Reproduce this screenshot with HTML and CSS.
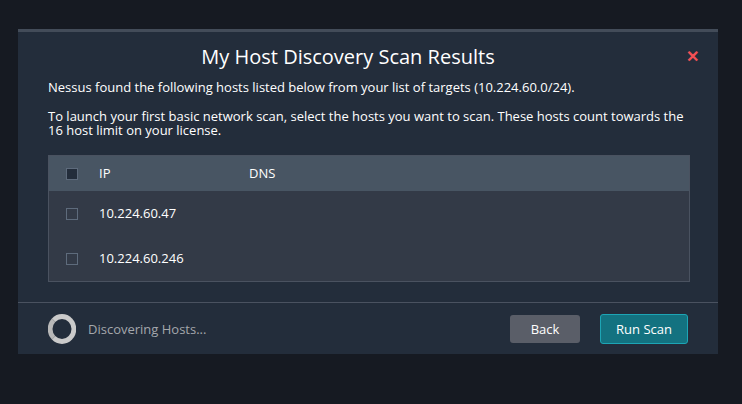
FILE: index.html
```html
<!DOCTYPE html>
<html>
<head>
<meta charset="utf-8">
<link rel="stylesheet" href="styles.css">
</head>
<body>
<div class="modal">
  <div class="header">
    <h1 class="title">My Host Discovery Scan Results</h1>
    <span class="close">&#x2715;</span>
  </div>
  <div class="body">
    <p class="p1">Nessus found the following hosts listed below from your list of targets (10.224.60.0/24).</p>
    <p class="p2">To launch your first basic network scan, select the hosts you want to scan. These hosts count towards the 16 host limit on your license.</p>
    <div class="table">
      <div class="row head">
        <span class="cb"></span>
        <span class="ip">IP</span>
        <span class="dns">DNS</span>
      </div>
      <div class="row">
        <span class="cb"></span>
        <span class="ip">10.224.60.47</span>
        <span class="dns"></span>
      </div>
      <div class="row">
        <span class="cb"></span>
        <span class="ip">10.224.60.246</span>
        <span class="dns"></span>
      </div>
    </div>
  </div>
  <div class="footer">
    <div class="status">
      <span class="spinner"></span>
      <span class="status-text">Discovering Hosts...</span>
    </div>
    <div class="actions">
      <button class="btn back">Back</button>
      <button class="btn run">Run Scan</button>
    </div>
  </div>
</div>
</body>
</html>
```

FILE: styles.css
```css
html, body {
  margin: 0;
  padding: 0;
  background: #161a22;
  font-family: "Open Sans", "Liberation Sans", sans-serif;
  color: #ffffff;
}
body {
  padding: 29px 24px 0 18px;
}
.modal {
  width: 700px;
  background: #232d3b;
  border-top: 3px solid #434c59;
  box-sizing: border-box;
  height: 325px;
  display: flex;
  flex-direction: column;
}
.header {
  display: flex;
  justify-content: center;
  align-items: center;
  position: relative;
  height: 48px;
  padding-right: 40px;
}
.title {
  margin: 0;
  font-size: 20px;
  font-weight: 400;
  margin-top: 1px;
}
.close {
  position: absolute;
  right: 19px;
  top: 15px;
  color: #f25055;
  font-size: 16px;
  font-weight: 700;
  line-height: 18px;
}
.body {
  padding: 0 28px 0 30px;
  font-size: 13px;
  line-height: 15px;
}
.p1 {
  margin: 0;
}
.p2 {
  margin: 14px 0 0 0;
  line-height: 14px;
}
.table {
  margin-top: 18px;
  border: 1px solid #4a5260;
  background: #333a47;
}
.row {
  display: flex;
  align-items: center;
  height: 45px;
  font-size: 13px;
}
.row.head {
  background: #485563;
  height: 35px;
}
.cb {
  width: 10px;
  height: 10px;
  border: 1px solid #5e6b7c;
  background: #232d3b;
  margin-left: 17px;
  flex: none;
}
.row:not(.head) .cb {
  background: #333a47;
}
.ip {
  margin-left: 21px;
  width: 150px;
}
.footer {
  margin-top: 20px;
  border-top: 1px solid #4a5260;
  display: flex;
  justify-content: space-between;
  align-items: center;
  padding: 10px 30px 0 29px;
}
.status {
  display: flex;
  align-items: center;
}
.spinner {
  width: 20px;
  height: 20px;
  border: 5px solid #cacaca;
  border-left-color: #b8b8b8;
  border-radius: 50%;
  margin-top: 1px;
  flex: none;
  transform: scaleX(0.95);
}
.status-text {
  margin-left: 11px;
  color: #a4a7ac;
  font-size: 13px;
}
.actions {
  display: flex;
  gap: 20px;
  align-items: center;
}
.btn {
  font-family: "Open Sans", "Liberation Sans", sans-serif;
  font-size: 13px;
  color: #ffffff;
  border-radius: 3px;
  cursor: pointer;
}
.back {
  width: 70px;
  height: 28px;
  background: #5a5e68;
  border: none;
}
.run {
  width: 88px;
  height: 30px;
  background: #137280;
  border: 1px solid #1da5b5;
}
```
